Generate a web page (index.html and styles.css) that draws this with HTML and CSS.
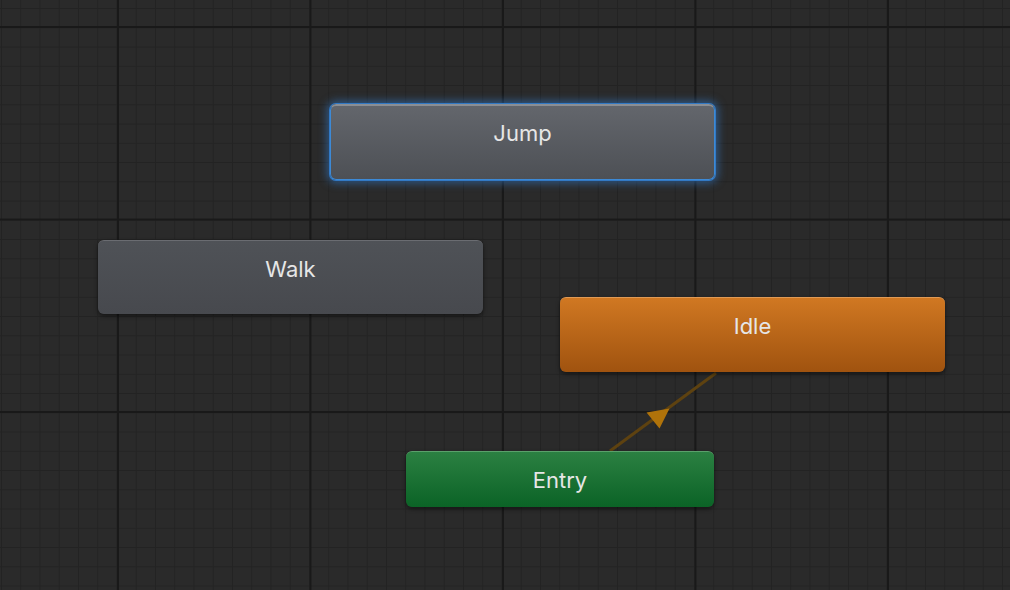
FILE: index.html
```html
<!DOCTYPE html>
<html lang="en">
<head>
  <meta charset="UTF-8">
  <title>Animator</title>
  <link rel="stylesheet" href="styles.css">
</head>
<body>
  <div class="graph">
    <!-- transition Entry -> Idle -->
    <svg class="links" width="1010" height="590" viewBox="0 0 1010 590">
      <line x1="610" y1="451" x2="716" y2="373" stroke="#5e4210" stroke-width="3"/>
      <polygon points="646.5,412.5 669.5,408.5 659.5,428.5" fill="#b0730a"/>
    </svg>

    <div class="state state-default" style="left:330px; top:104px;">Jump</div>
    <div class="state" style="left:98px; top:240px;">Walk</div>
    <div class="state state-idle" style="left:560px; top:297px;">Idle</div>
    <div class="state state-entry" style="left:406px; top:451px;">Entry</div>
  </div>
</body>
</html>
```

FILE: styles.css
```css
body {
  margin: 0;
  padding: 0;
  background: #2a2a2a;
  font-family: Inter, "Noto Sans", sans-serif;
}

.graph {
  position: relative;
  width: 1010px;
  height: 590px;
  overflow: hidden;
  background-color: #2a2a2a;
  background-image:
    linear-gradient(90deg, #191919 2px, transparent 2px),
    linear-gradient(0deg, #191919 2px, transparent 2px),
    linear-gradient(90deg, #232323 1px, transparent 1px),
    linear-gradient(0deg, #232323 1px, transparent 1px);
  background-size: 192.5px 192.5px, 192.5px 192.5px, 19.25px 19.25px, 19.25px 19.25px;
  background-position: 117px 28px, 117px 28px, 1px 9px, 1px 9px;
}

.links {
  position: absolute;
  left: 0;
  top: 0;
}

.state {
  position: absolute;
  box-sizing: border-box;
  width: 385px;
  height: 74px;
  padding-top: 15px;
  border-radius: 6px;
  text-align: center;
  font-size: 22px;
  line-height: 27px;
  color: #e6e6e6;
  background: linear-gradient(#4f5257, #47494e);
  border-top: 1px solid #6a6c71;
  box-shadow: 0 2px 4px rgba(0, 0, 0, 0.5);
}

.state-default {
  height: 76px;
  padding-top: 14px;
  background: linear-gradient(#63666c, #4d5055);
  border: 1px solid #3d8ad6;
  border-top: 2px solid #8a8e94;
  box-shadow: 0 0 0 1px #3279c4, 0 0 9px 3px rgba(52, 130, 215, 0.55);
}

.state-idle {
  height: 75px;
  background: linear-gradient(#d07822, #a0530f);
  border-top: 1px solid #e09a55;
}

.state-entry {
  width: 308px;
  height: 56px;
  background: linear-gradient(#2b8042, #0b6326);
  border-top: 1px solid #5aa06b;
}
```
